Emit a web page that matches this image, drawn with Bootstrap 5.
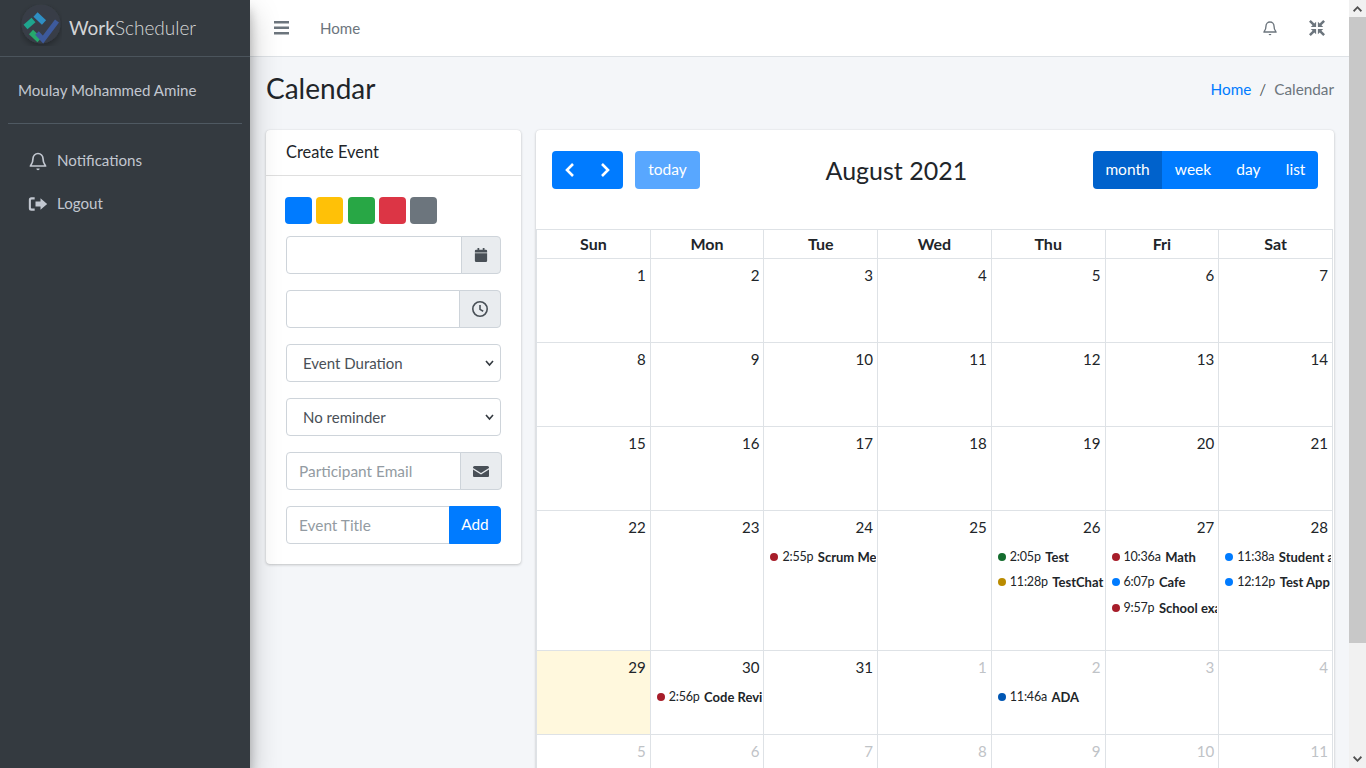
<!DOCTYPE html>
<html lang="en">
<head>
  <meta charset="UTF-8" />
  <title>WorkScheduler | Calendar</title>
  <link href="https://cdn.jsdelivr.net/npm/bootstrap@5.3.0/dist/css/bootstrap.min.css" rel="stylesheet">
  <style>
    html, body { height: 100%; margin: 0; overflow: hidden; }
    body { font-family: "Lato", "Noto Sans", sans-serif; font-size: 15.1px; background: #f4f6f9; color: #212529; }
    .app-shell { height: 100vh; }
    .side-panel { width: 250px; flex: none; background: #343a40; color: #c2c7d0; box-shadow: 0 14px 28px rgba(0,0,0,.25), 0 10px 10px rgba(0,0,0,.22); z-index: 5; }
    .brand-row { height: 57px; border-bottom: 1px solid #4b545c; padding-left: 20px; }
    .brand-logo { width: 42px; height: 42px; margin-right: 7px; margin-bottom: 6px; flex: none; }
    .brand-name { font-size: 19px; font-weight: 300; color: rgba(255,255,255,.8); padding-top: 1px; }
    .brand-name b { font-weight: 400; }
    .user-row { height: 67px; margin: 0 8px; padding-left: 10px; border-bottom: 1px solid #4f5962; }
    .side-link { color: #c2c7d0; height: 43px; padding-left: 28px; text-decoration: none; }
    .side-link svg { width: 20px; height: 20px; margin-right: 9px; }
    .main-col { min-width: 0; }
    .top-bar { height: 57px; background: #fff; border-bottom: 1px solid #dee2e6; padding: 0 24px; flex: none; }
    .top-bar svg { fill: #6c757d; }
    .top-home { color: #6c757d; text-decoration: none; margin-left: 30px; }
    .head-row { height: 73px; padding: 0 15px 9px 16px; flex: none; }
    .head-row h1 { font-size: 28px; margin: 0; font-weight: 400; }
    .crumbs { font-size: 15.3px; margin: 0; }
    .crumbs a { text-decoration: none; color: #007bff; }
    .crumbs .breadcrumb-item.active { color: #6c757d; }
    .content-row { padding: 0 15px 0 16px; gap: 15px; align-items: flex-start; }
    .ev-card { width: 255px; flex: none; border: 0; box-shadow: 0 0 1px rgba(0,0,0,.125), 0 1px 3px rgba(0,0,0,.2); border-radius: 4px; background: #fff; }
    .ev-head { height: 46px; padding: 0 20px; border-bottom: 1px solid rgba(0,0,0,.125); font-size: 16.4px; line-height: 43px; }
    .ev-body { padding: 21px 20px 20px; }
    .swatch-row { gap: 4.25px; margin: 0 0 12px -1px; }
    .swatch { width: 27px; height: 27px; border-radius: 4px; }
    .ev-body .form-control, .ev-body .form-select, .ev-body .input-group-text, .ev-body .btn { height: 38px; font-size: 15.4px; border-color: #ced4da; border-radius: 4px; }
    .ev-body .form-control::placeholder { color: #939ba2; }
    .ev-body .form-select { color: #495057; padding-left: 16px; font-size: 15px; background-size: 9px 10px; background-position: right 6px center; background-image: url("data:image/svg+xml,%3csvg xmlns='http://www.w3.org/2000/svg' viewBox='0 0 9 10'%3e%3cpath fill='none' stroke='%23343a40' stroke-width='1.600' d='M1 3l3.500 4L8 3'/%3e%3c/svg%3e"); }
    .ev-body .input-group-text { background: #e9ecef; color: #495057; justify-content: center; }
    .ev-body .input-group-text svg { width: 16px; height: 16px; fill: #495057; }
    .field-gap { margin-bottom: 16px; }
    .add-btn { background: #007bff; color: #fff; border-color: #007bff !important; width: 52px; padding: 0; }
    .cal-card { flex: 1; min-width: 0; border: 0; box-shadow: 0 0 1px rgba(0,0,0,.125), 0 1px 3px rgba(0,0,0,.2); border-radius: 4px 4px 0 0; background: #fff; }
    .cal-tools { height: 99px; padding: 21px 16px 0; align-items: flex-start; }
    .cal-tools h2 { font-size: 25px; font-weight: 400; margin: 0; line-height: 38px; }
    .tool-btn { background: #007bff; color: #fff; border: 0; height: 38px; font-size: 15.5px; padding: 0 12.6px; }
    .tool-btn svg { width: 14px; height: 16px; display: block; }
    .tool-btn.is-on { background: #0062cc; }
    .tool-btn.is-off { background: #58a7ff; }
    .tool-today { margin-left: 12px; border-radius: 4px; width: 65px; padding: 0; }
    .arrow-pair { width: 71px; border-radius: 4px; overflow: hidden; }
    .arrow-pair .tool-btn { flex: 1; padding: 0; display: flex; align-items: center; justify-content: center; }
    .view-group { border-radius: 4px; overflow: hidden; }
    .cal-grid { table-layout: fixed; width: 797px; border-collapse: collapse; margin: 0; }
    .cal-grid th, .cal-grid td { border: 1px solid #dee2e6; padding: 0; vertical-align: top; }
    .cal-grid th { height: 29px; text-align: center; vertical-align: middle; font-weight: 700; font-size: 16px; }
    .cal-grid td { height: 84px; }
    .cal-grid tr.tall-week td { height: 140px; }
    .day-num { text-align: right; padding: 6px 4px 0 0; line-height: 20px; height: 33px; }
    .other-month .day-num { color: #bfc3c7; }
    .is-today { background: #fff8dd; }
    .ev-line { display: flex; align-items: center; white-space: nowrap; overflow: hidden; font-size: 12.5px; letter-spacing: -.2px; line-height: 20px; height: 25.5px; padding-left: 6px; margin-right: 1px; }
    .ev-line i { width: 8px; height: 8px; border-radius: 50%; flex: none; margin-right: 4px; }
    .ev-line b { margin-left: 4.5px; font-weight: 700; font-size: 13px; letter-spacing: 0; }
    .fake-scroll { width: 17px; flex: none; background: #f1f1f1; position: relative; }
    .scroll-thumb { position: absolute; top: 17px; left: 0; right: 0; height: 626px; background: #c8c8c8; }
    .scroll-arrow { position: absolute; left: 4px; width: 9px; height: 6px; fill: #505050; }
  </style>
</head>
<body>
<div class="app-shell d-flex">
  <aside class="side-panel d-flex flex-column">
    <div class="brand-row d-flex align-items-center">
      <svg class="brand-logo" viewBox="0 0 42 42" fill="none">
        <defs><filter id="logoShade" x="-30%" y="-30%" width="160%" height="160%"><feDropShadow dx="0" dy="3" stdDeviation="3" flood-color="#000" flood-opacity=".3"/></filter></defs>
        <circle cx="21" cy="20" r="19.500" fill="#383e46" filter="url(#logoShade)"/>
        <path d="M5.500 23 13.500 16" stroke="#1fa58e" stroke-width="6"/>
        <path d="M15.500 10.500 24 18.500" stroke="#2f8fc4" stroke-width="6"/>
        <path d="M11 28 19.500 36" stroke="#26a96c" stroke-width="6"/>
        <path d="M17 29 23 35.500 37 17" stroke="#3d5a9c" stroke-width="5"/>
      </svg>
      <span class="brand-name"><b>Work</b>Scheduler</span>
    </div>
    <div class="user-row d-flex align-items-center">Moulay Mohammed Amine</div>
    <nav class="nav flex-column" style="margin-top:15px">
      <a class="side-link d-flex align-items-center" href="#">
        <svg viewBox="0 0 24 24" fill="none" stroke="#c2c7d0" stroke-width="2"><path d="M12 3a6 6 0 0 0-6 6c0 6-3 8-3 9h18c0-1-3-3-3-9a6 6 0 0 0-6-6z"/><path d="M10 21a2 2 0 0 0 4 0z" fill="#c2c7d0" stroke="none"/></svg>Notifications</a>
      <a class="side-link d-flex align-items-center" href="#">
        <svg viewBox="0 0 24 24" fill="#c2c7d0"><path d="M15 5l8 7-8 7v-4H9V9h6z"/><path d="M8 4H4a3 3 0 0 0-3 3v10a3 3 0 0 0 3 3h4v-2.500H4.500a1 1 0 0 1-1-1v-9a1 1 0 0 1 1-1H8z"/></svg>Logout</a>
    </nav>
  </aside>

  <div class="main-col flex-grow-1 d-flex flex-column overflow-hidden">
    <div class="top-bar d-flex align-items-center">
      <svg width="16" height="16" viewBox="0 0 16 16"><rect y="1" width="15" height="2.500"/><rect y="6.500" width="15" height="2.500"/><rect y="12" width="15" height="2.500"/></svg>
      <a class="top-home" href="#">Home</a>
      <div class="ms-auto d-flex align-items-center" style="gap:31px">
        <svg width="16" height="18" viewBox="0 0 24 24" style="fill:none;stroke:#6c757d;stroke-width:2"><path d="M12 3a6 6 0 0 0-6 6c0 6-3 8-3 9h18c0-1-3-3-3-9a6 6 0 0 0-6-6z"/><path d="M10 21a2 2 0 0 0 4 0z" fill="#6c757d" stroke="none"/></svg>
        <svg width="16" height="16" viewBox="0 0 18 18"><path d="M0 2l2-2 4 4 2-2v6H2l2-2zM18 2l-2-2-4 4-2-2v6h6l-2-2zM0 16l2 2 4-4 2 2v-6H2l2 2zM18 16l-2 2-4-4-2 2v-6h6l-2 2z"/></svg>
      </div>
    </div>

    <div class="head-row d-flex align-items-center justify-content-between">
      <h1>Calendar</h1>
      <ol class="breadcrumb crumbs">
        <li class="breadcrumb-item"><a href="#">Home</a></li>
        <li class="breadcrumb-item active">Calendar</li>
      </ol>
    </div>

    <div class="content-row d-flex">
      <div class="ev-card">
        <div class="ev-head">Create Event</div>
        <div class="ev-body">
          <div class="swatch-row d-flex">
            <span class="swatch" style="background:#007bff"></span>
            <span class="swatch" style="background:#ffc107"></span>
            <span class="swatch" style="background:#28a745"></span>
            <span class="swatch" style="background:#dc3545"></span>
            <span class="swatch" style="background:#6c757d"></span>
          </div>
          <div class="input-group field-gap">
            <input class="form-control" type="text">
            <span class="input-group-text" style="width:40px"><svg viewBox="0 0 16 16"><path d="M1 6h14v8.500a1.500 1.500 0 0 1-1.500 1.500h-11A1.500 1.500 0 0 1 1 14.500zM2.500 2H4V0h2v2h4V0h2v2h1.500A1.500 1.500 0 0 1 15 3.500V5H1V3.500A1.500 1.500 0 0 1 2.500 2z"/></svg></span>
          </div>
          <div class="input-group field-gap">
            <input class="form-control" type="text">
            <span class="input-group-text" style="width:42px"><svg viewBox="0 0 16 16"><path d="M8 0a8 8 0 1 0 0 16A8 8 0 0 0 8 0zm0 14.400A6.400 6.400 0 1 1 8 1.600a6.400 6.400 0 0 1 0 12.800zM8.800 4H7.200v4.800l3.600 2.100.8-1.300-2.800-1.600z"/></svg></span>
          </div>
          <select class="form-select field-gap"><option>Event Duration</option></select>
          <select class="form-select field-gap"><option>No reminder</option></select>
          <div class="input-group field-gap" style="width:216px">
            <input class="form-control" type="text" placeholder="Participant Email">
            <span class="input-group-text" style="width:42px"><svg viewBox="0 0 16 16"><path d="M0 4.500A1.500 1.500 0 0 1 1.500 3h13A1.500 1.500 0 0 1 16 4.500v.4L8 10 0 4.900zM0 6.600V13a1 1 0 0 0 1 1h14a1 1 0 0 0 1-1V6.600l-8 5z"/></svg></span>
          </div>
          <div class="input-group">
            <input class="form-control" type="text" placeholder="Event Title">
            <button class="btn add-btn" type="button">Add</button>
          </div>
        </div>
      </div>

      <div class="cal-card">
        <div class="cal-tools d-flex justify-content-between">
          <div class="d-flex">
            <div class="arrow-pair d-flex">
              <button class="tool-btn" type="button"><svg viewBox="0 0 14 16" fill="none" stroke="#fff" stroke-width="2.600"><path d="M10 2 4 8l6 6"/></svg></button>
              <button class="tool-btn" type="button"><svg viewBox="0 0 14 16" fill="none" stroke="#fff" stroke-width="2.600"><path d="M4 2l6 6-6 6"/></svg></button>
            </div>
            <button class="tool-btn is-off tool-today" type="button">today</button>
          </div>
          <h2>August 2021</h2>
          <div class="view-group d-flex">
            <button class="tool-btn is-on" type="button">month</button>
            <button class="tool-btn" type="button">week</button>
            <button class="tool-btn" type="button">day</button>
            <button class="tool-btn" type="button">list</button>
          </div>
        </div>
        <table class="cal-grid" id="calGrid"></table>
      </div>
    </div>
  </div>

  <div class="fake-scroll">
    <svg class="scroll-arrow" style="top:6px" viewBox="0 0 9 6"><path d="M4.500 0 9 4.500 7.800 6 4.500 2.600 1.200 6 0 4.500z"/></svg>
    <div class="scroll-thumb"></div>
    <svg class="scroll-arrow" style="bottom:6px" viewBox="0 0 9 6"><path d="M4.500 6 9 1.500 7.800 0 4.500 3.400 1.200 0 0 1.500z"/></svg>
  </div>
</div>

<script>
  const days = ["Sun", "Mon", "Tue", "Wed", "Thu", "Fri", "Sat"];
  const red = "#a71d2a", blue = "#007bff", green = "#146c2e", gold = "#ba8b00", navy = "#0056b3";
  const events = {
    "24": [[red, "2:55p", "Scrum Meeting"]],
    "26": [[green, "2:05p", "Test"], [gold, "11:28p", "TestChat"]],
    "27": [[red, "10:36a", "Math"], [blue, "6:07p", "Cafe"], [red, "9:57p", "School exam"]],
    "28": [[blue, "11:38a", "Student app"], [blue, "12:12p", "Test App"]],
    "30": [[red, "2:56p", "Code Review"]],
    "n2": [[navy, "11:46a", "ADA"]]
  };

  let html = "<thead><tr>" + days.map(d => `<th>${d}</th>`).join("") + "</tr></thead><tbody>";
  let n = 1, other = false;
  for (let w = 0; w < 6; w++) {
    html += `<tr class="${w === 3 ? "tall-week" : ""}">`;
    for (let d = 0; d < 7; d++) {
      const key = (other ? "n" : "") + n;
      const evs = (events[key] || []).map(e =>
        `<div class="ev-line"><i style="background:${e[0]}"></i>${e[1]}<b>${e[2]}</b></div>`).join("");
      const cls = (other ? "other-month " : "") + (n === 29 && !other ? "is-today" : "");
      html += `<td class="${cls}"><div class="day-num">${n}</div>${evs}</td>`;
      n++;
      if (n > 31 && !other) { n = 1; other = true; }
    }
    html += "</tr>";
  }
  document.getElementById("calGrid").innerHTML = html + "</tbody>";
</script>
<script src="https://cdn.jsdelivr.net/npm/bootstrap@5.3.0/dist/js/bootstrap.bundle.min.js"></script>
</body>
</html>
